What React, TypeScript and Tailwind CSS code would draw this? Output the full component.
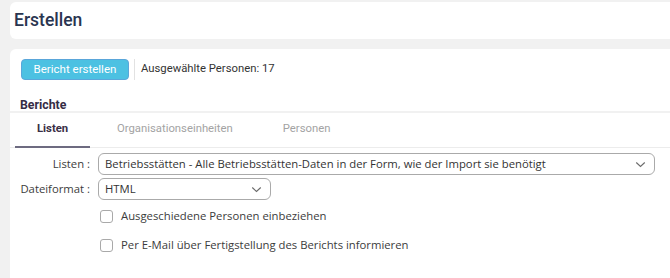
import React from "react";

const Chevron = () => (
  <svg width="11" height="7" viewBox="0 0 11 7" fill="none" className="shrink-0">
    <path d="M1.25 1.5 5.5 5.5l4.25-4" stroke="#6b6b6b" strokeWidth="1.1" />
  </svg>
);

const Checkbox = ({ label }: { label: string }) => (
  <label className="flex items-center gap-[8px] h-[13px]">
    <span className="w-[13px] h-[13px] rounded-[3px] border border-[#a9a9a9] bg-white shrink-0" />
    <span className="text-[11.3px] text-[#3c3c3c]">{label}</span>
  </label>
);

export default function App() {
  return (
    <div
      className="h-[278px] w-[670px] overflow-hidden bg-[#f1f1f1] pl-[10px] pt-[2px]"
      style={{ fontFamily: "Roboto, 'Liberation Sans', sans-serif" }}
    >
      {/* Header */}
      <div className="h-[37px] rounded-l-md bg-white flex items-center pl-[4px]">
        <h1 className="text-[17.5px] leading-none font-medium text-[#2a3550]">Erstellen</h1>
      </div>

      {/* Toolbar + Berichte */}
      <div className="mt-[10px] h-[62px] rounded-tl-md bg-white pl-[11px] pt-[10px]">
        <div className="flex items-center h-[21px]">
          <button className="h-[21px] w-[108px] rounded-[4px] bg-[#4cc1e2] border border-[#5aa6da] text-white text-[11.5px] leading-none">
            Bericht erstellen
          </button>
          <div className="ml-[5px] h-[21px] w-px bg-[#e2e2e2]" />
          <span className="ml-[6px] text-[11.3px] text-[#333]">Ausgewählte Personen: 17</span>
        </div>
        <div className="mt-[16px] -ml-px text-[12.3px] font-bold text-[#352c45]">Berichte</div>
      </div>

      {/* Tabs + Form */}
      <div className="mt-[2px] h-[165px] bg-white">
        <div className="flex items-end h-[35px] pl-[5px] border-b border-[#ececec]">
          <div className="w-[75px] h-[35px] flex items-center pl-[22px] border-b-2 border-[#6d6b80] text-[11.3px] font-bold text-[#3a2f45] -mb-px">
            Listen
          </div>
          <div className="h-[35px] flex items-center pl-[27px] text-[11.3px] text-[#a3a3a3]">Organisationseinheiten</div>
          <div className="h-[35px] flex items-center pl-[50px] text-[11.3px] text-[#a3a3a3]">Personen</div>
        </div>

        <div
          className="pt-[5px] pl-[10px]"
          style={{ fontFamily: "'Open Sans', 'Liberation Sans', sans-serif" }}
        >
          <div className="flex items-center h-[22px]">
            <span className="w-[70px] text-right whitespace-nowrap text-[11.3px] text-[#3c3c3c]">Listen :</span>
            <div className="ml-[8px] w-[557px] h-[22px] rounded-[6px] border border-[#aaaaaa] flex items-center justify-between pl-[6px] pr-[8px]">
              <span className="text-[11.3px] text-[#333] whitespace-nowrap">
                Betriebsstätten - Alle Betriebsstätten-Daten in der Form, wie der Import sie benötigt
              </span>
              <Chevron />
            </div>
          </div>
          <div className="flex items-center h-[22px] mt-[3px]">
            <span className="w-[70px] text-right whitespace-nowrap text-[11.3px] text-[#3c3c3c]">Dateiformat :</span>
            <div className="ml-[8px] w-[173px] h-[22px] rounded-[6px] border border-[#aaaaaa] flex items-center justify-between pl-[6px] pr-[8px]">
              <span className="text-[11.3px] text-[#333]">HTML</span>
              <Chevron />
            </div>
          </div>
          <div className="pl-[80px] mt-[10px] flex flex-col gap-[16px]">
            <Checkbox label="Ausgeschiedene Personen einbeziehen" />
            <Checkbox label="Per E-Mail über Fertigstellung des Berichts informieren" />
          </div>
        </div>
      </div>
    </div>
  );
}
